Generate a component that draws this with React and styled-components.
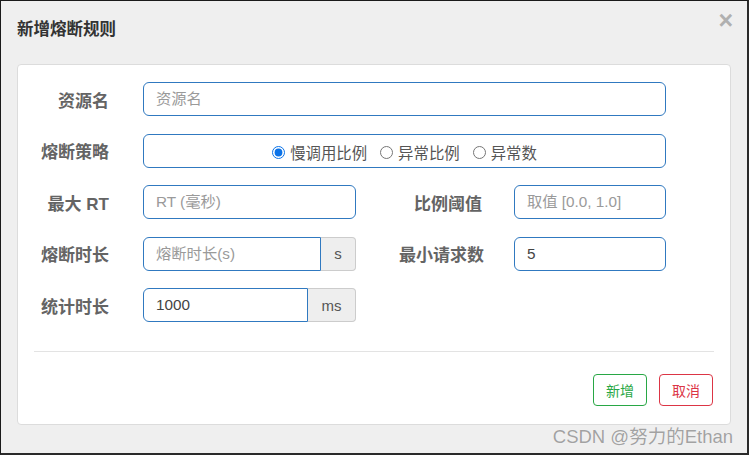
import React, { useState } from 'react';
import styled, { createGlobalStyle } from 'styled-components';

const GlobalStyle = createGlobalStyle`
  html, body {
    margin: 0;
    padding: 0;
    background: #efefef;
  }
  * {
    box-sizing: border-box;
  }
`;

const Frame = styled.div`
  position: relative;
  width: 749px;
  height: 455px;
  background: #efefef;
  border-top: 1px solid #1a1a1a;
  border-left: 1px solid #1a1a1a;
  border-right: 2px solid #2a2a2a;
  border-bottom: 2px solid #2a2a2a;
  font-family: "Liberation Sans", "Noto Sans CJK SC", sans-serif;
  overflow: hidden;
`;

const Header = styled.div`
  display: flex;
  justify-content: space-between;
  align-items: flex-start;
  height: 63px;
  padding: 16px 14px 0 16px;
`;

const Title = styled.h4`
  margin: 0;
  font-size: 16.5px;
  line-height: 24px;
  font-weight: bold;
  color: #333;
`;

const Close = styled.span`
  margin-top: -12px;
  font-size: 25px;
  font-weight: bold;
  line-height: 30px;
  color: #b0b0b0;
  cursor: pointer;
`;

const Panel = styled.div`
  margin: 0 16px;
  height: 361px;
  background: #fff;
  border: 1px solid #dcdcdc;
  border-radius: 4px;
  padding-top: 17px;
`;

const Form = styled.div`
  display: flex;
  flex-direction: column;
  gap: 17.5px;
`;

const Row = styled.div`
  display: grid;
  grid-template-columns: 125px 213px 158px 152px;
  align-items: center;
  height: 34px;
`;

const Label = styled.label`
  text-align: right;
  padding-right: ${(p) => p.$pr || 34}px;
  font-size: 17px;
  font-weight: bold;
  color: #646464;
  white-space: nowrap;
`;

const Field = styled.div`
  display: flex;
  height: 34px;
  grid-column: ${(p) => (p.$wide ? '2 / 5' : 'auto')};
`;

const Input = styled.input`
  flex: 1;
  min-width: 0;
  height: 34px;
  padding: 0 12px;
  font-family: inherit;
  font-size: 15.3px;
  color: #444;
  border: 1px solid #3079c0;
  border-radius: ${(p) => (p.$addon ? '6px 0 0 6px' : '6px')};
  outline: none;
  background: #fff;
  &::placeholder {
    color: #9a9a9a;
  }
`;

const Addon = styled.span`
  display: flex;
  align-items: center;
  justify-content: center;
  width: ${(p) => p.$w}px;
  height: 34px;
  background: #eee;
  border: 1px solid #ccc;
  border-left: none;
  border-radius: 0 4px 4px 0;
  font-size: 15px;
  color: #555;
`;

const RadioBox = styled.div`
  grid-column: 2 / 5;
  display: flex;
  align-items: center;
  justify-content: center;
  gap: 13px;
  height: 34px;
  border: 1px solid #3079c0;
  border-radius: 6px;
  padding-top: 3px;
`;

const RadioOption = styled.label`
  display: flex;
  align-items: center;
  gap: 5px;
  font-size: 15.4px;
  color: #555;
  cursor: pointer;
  input {
    margin: 0;
    width: 13px;
    height: 13px;
    accent-color: #0a72e8;
  }
`;

const Divider = styled.hr`
  margin: 29px 16px 0;
  border: none;
  border-top: 1px solid #e3e3e3;
`;

const Footer = styled.div`
  display: flex;
  justify-content: flex-end;
  gap: 12px;
  padding: 22px 17px 0 0;
`;

const Button = styled.button`
  width: 54px;
  height: 32px;
  font-family: inherit;
  font-size: 14px;
  background: #fff;
  color: ${(p) => p.$color};
  border: 1px solid ${(p) => p.$color};
  border-radius: 4px;
  cursor: pointer;
`;

const Watermark = styled.div`
  position: absolute;
  right: 14px;
  bottom: 5px;
  font-size: 18.5px;
  color: #a2a2a2;
  text-shadow: 0 0 1px #fff;
  pointer-events: none;
`;

const strategies = ['慢调用比例', '异常比例', '异常数'];

const App = () => {
  const [strategy, setStrategy] = useState(0);

  return (
    <>
      <GlobalStyle />
      <Frame>
        <Header>
          <Title>新增熔断规则</Title>
          <Close>×</Close>
        </Header>
        <Panel>
          <Form>
            <Row>
              <Label>资源名</Label>
              <Field $wide>
                <Input placeholder="资源名" />
              </Field>
            </Row>
            <Row>
              <Label>熔断策略</Label>
              <RadioBox>
                {strategies.map((s, i) => (
                  <RadioOption key={s}>
                    <input
                      type="radio"
                      name="strategy"
                      checked={strategy === i}
                      onChange={() => setStrategy(i)}
                    />
                    {s}
                  </RadioOption>
                ))}
              </RadioBox>
            </Row>
            <Row>
              <Label>最大 RT</Label>
              <Field>
                <Input placeholder="RT (毫秒)" />
              </Field>
              <Label $pr={32}>比例阈值</Label>
              <Field>
                <Input placeholder="取值 [0.0, 1.0]" />
              </Field>
            </Row>
            <Row>
              <Label>熔断时长</Label>
              <Field>
                <Input $addon placeholder="熔断时长(s)" />
                <Addon $w={35}>s</Addon>
              </Field>
              <Label $pr={30}>最小请求数</Label>
              <Field>
                <Input defaultValue="5" />
              </Field>
            </Row>
            <Row>
              <Label>统计时长</Label>
              <Field>
                <Input $addon defaultValue="1000" />
                <Addon $w={48}>ms</Addon>
              </Field>
            </Row>
          </Form>
          <Divider />
          <Footer>
            <Button $color="#28a745">新增</Button>
            <Button $color="#dc3545">取消</Button>
          </Footer>
        </Panel>
        <Watermark>CSDN @努力的Ethan</Watermark>
      </Frame>
    </>
  );
};

export default App;
